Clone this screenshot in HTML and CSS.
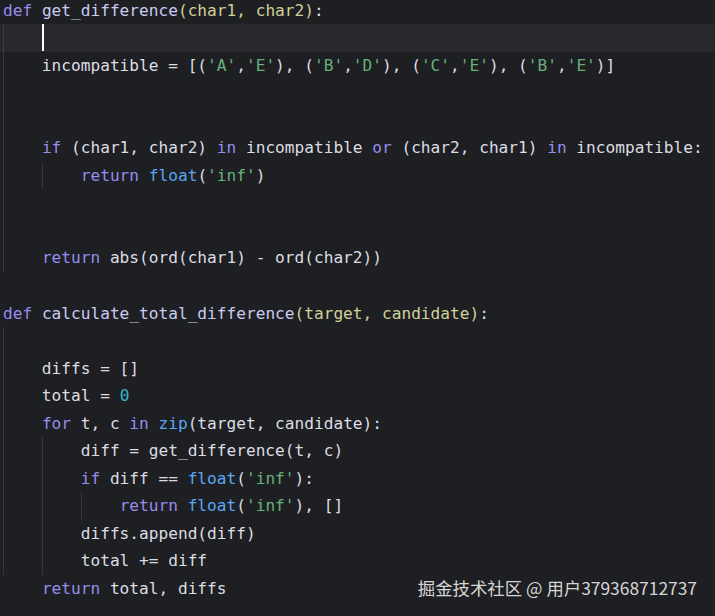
FILE: index.html
```html
<!DOCTYPE html>
<html lang="zh">
<head>
<meta charset="utf-8">
<title>code</title>
<link rel="stylesheet" href="styles.css">
</head>
<body>
<div class="editor">
  <div class="line"><span class="kw">def</span> <span class="fn">get_difference</span><span class="pr">(char1, char2)</span>:</div>
  <div class="body">
    <div class="line current">    <span class="caret"></span></div>
    <div class="line">    incompatible = [(<span class="st">'A'</span>,<span class="st">'E'</span>), (<span class="st">'B'</span>,<span class="st">'D'</span>), (<span class="st">'C'</span>,<span class="st">'E'</span>), (<span class="st">'B'</span>,<span class="st">'E'</span>)]</div>
    <div class="line"> </div>
    <div class="line"> </div>
    <div class="line">    <span class="kw">if</span> (char1, char2) <span class="kw">in</span> incompatible <span class="kw">or</span> (char2, char1) <span class="kw">in</span> incompatible:</div>
    <div class="line guide1">        <span class="kw">return</span> <span class="bi">float</span>(<span class="st">'inf'</span>)</div>
    <div class="line"> </div>
    <div class="line"> </div>
    <div class="line">    <span class="kw">return</span> abs(ord(char1) - ord(char2))</div>
  </div>
  <div class="line"> </div>
  <div class="line"><span class="kw">def</span> <span class="fn">calculate_total_difference</span><span class="pr">(target, candidate)</span>:</div>
  <div class="body">
    <div class="line"> </div>
    <div class="line">    diffs = []</div>
    <div class="line">    total = <span class="nu">0</span></div>
    <div class="line">    <span class="kw">for</span> t, c <span class="kw">in</span> <span class="bi">zip</span>(target, candidate):</div>
    <div class="guide1">
      <div class="line">        diff = get_difference(t, c)</div>
      <div class="line">        <span class="kw">if</span> diff == <span class="bi">float</span>(<span class="st">'inf'</span>):</div>
      <div class="line guide2">            <span class="kw">return</span> <span class="bi">float</span>(<span class="st">'inf'</span>), []</div>
      <div class="line">        diffs.append(diff)</div>
      <div class="line">        total += diff</div>
    </div>
  </div>
  <div class="line">    <span class="kw">return</span> total, diffs</div>
</div>
<div class="watermark">掘金技术社区 @ 用户379368712737</div>
</body>
</html>
```
FILE: styles.css
```css
html, body {
  margin: 0;
  padding: 0;
  background: #1e1f22;
  height: 100%;
  overflow: hidden;
}
body {
  position: relative;
}
.editor {
  margin-top: -3.5px;
  font-family: "DejaVu Sans Mono", "Liberation Mono", monospace;
  font-size: 16.15px;
  color: #dcdde3;
}
.line {
  height: 27.55px;
  line-height: 27.55px;
  white-space: pre;
  padding-left: 3px;
}
.body {
  background: linear-gradient(#35373c, #35373c) no-repeat 3px 0 / 1px 100%;
}
.guide1 {
  background: linear-gradient(#35373c, #35373c) no-repeat 42px 0 / 1px 100%;
}
.guide2 {
  background: linear-gradient(#35373c, #35373c) no-repeat 81px 0 / 1px 100%;
}
.line.current {
  background: linear-gradient(#3b3d43, #3b3d43) no-repeat 3px 0 / 1px 100%, #27292e;
}
.caret {
  display: inline-block;
  width: 2px;
  height: 27px;
  background: #ffffff;
  vertical-align: top;
}
.kw { color: #958dec; }
.fn { color: #cbcbf0; }
.pr { color: #d0d09a; }
.st { color: #67b07a; }
.nu { color: #36b4cb; }
.bi { color: #5aa6f2; }
.watermark {
  position: absolute;
  right: 18px;
  top: 576px;
  font-family: "Noto Sans CJK SC", "Noto Sans", sans-serif;
  font-size: 17.4px;
  line-height: 24px;
  color: #d6d6d6;
}
```
